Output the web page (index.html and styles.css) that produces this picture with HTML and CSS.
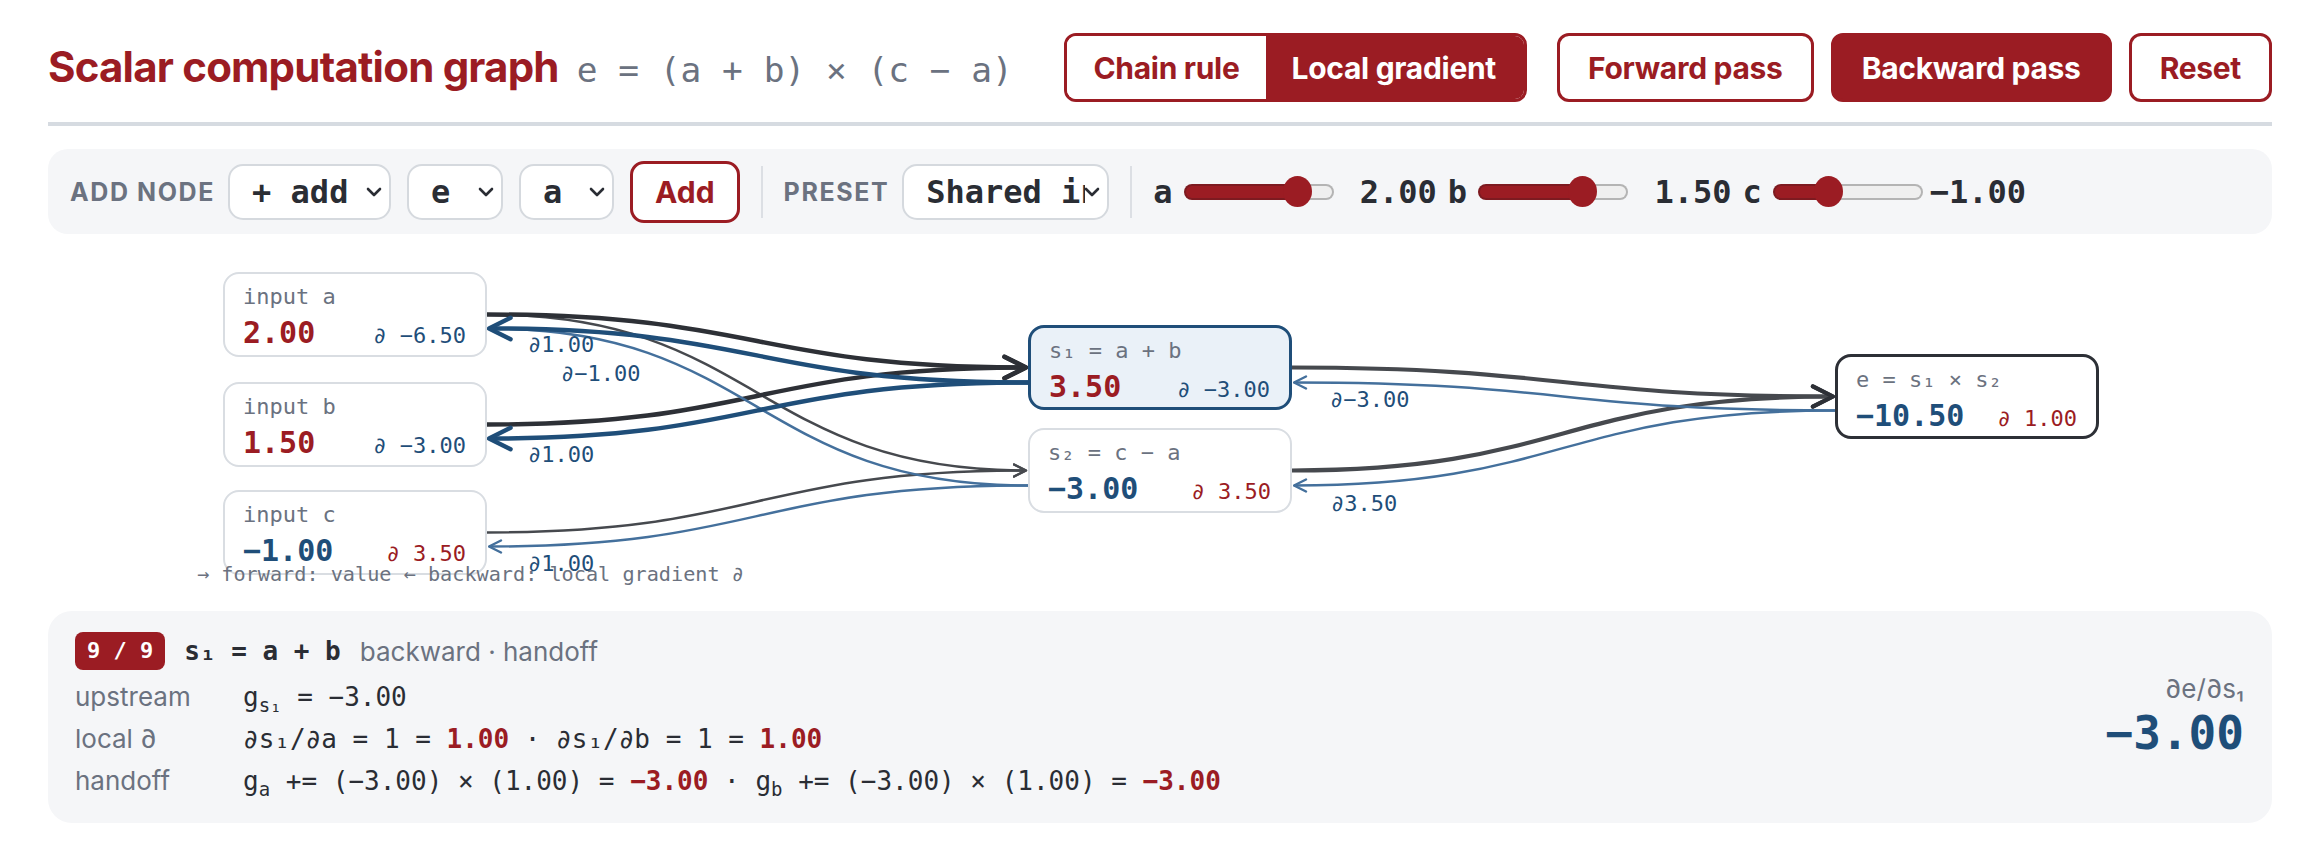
FILE: index.html
```html
<!DOCTYPE html>
<html lang="en">
<head>
<meta charset="utf-8">
<title>Scalar computation graph</title>
<link rel="stylesheet" href="styles.css">
</head>
<body>
<header class="top">
  <div class="title-group">
    <h1 class="title">Scalar computation graph</h1>
    <code class="formula">e = (a + b) × (c − a)</code>
  </div>
  <div class="actions">
    <div class="segmented">
      <button class="seg">Chain rule</button>
      <button class="seg seg-on">Local gradient</button>
    </div>
    <button class="btn">Forward pass</button>
    <button class="btn btn-solid">Backward pass</button>
    <button class="btn">Reset</button>
  </div>
</header>

<div class="toolbar">
  <span class="tb-label">Add node</span>
  <div class="select w-op">
    <select><option>+ add</option><option>× mul</option><option>− sub</option></select>
    <svg class="chev" viewBox="0 0 16 10"><path d="M2 2 L8 8 L14 2"/></svg>
  </div>
  <div class="select w-var">
    <select><option>e</option><option>s₁</option><option>s₂</option></select>
    <svg class="chev" viewBox="0 0 16 10"><path d="M2 2 L8 8 L14 2"/></svg>
  </div>
  <div class="select w-var2">
    <select><option>a</option><option>b</option><option>c</option></select>
    <svg class="chev" viewBox="0 0 16 10"><path d="M2 2 L8 8 L14 2"/></svg>
  </div>
  <button class="btn-add">Add</button>
  <span class="tb-sep"></span>
  <span class="tb-label">Preset</span>
  <div class="select w-preset">
    <select><option>Shared input</option><option>Chain</option></select>
    <svg class="chev" viewBox="0 0 16 10"><path d="M2 2 L8 8 L14 2"/></svg>
  </div>
  <span class="tb-sep"></span>
  <div class="params">
    <label class="param"><span class="param-name">a</span><input class="range" type="range" min="-3" max="3" step="0.5" value="2" style="--p: 77%"><output class="param-val">2.00</output></label>
    <label class="param"><span class="param-name">b</span><input class="range" type="range" min="-3" max="3" step="0.5" value="1.5" style="--p: 70%"><output class="param-val">1.50</output></label>
    <label class="param"><span class="param-name">c</span><input class="range" type="range" min="-3" max="3" step="0.5" value="-1" style="--p: 36%"><output class="param-val">−1.00</output></label>
  </div>
</div>

<div class="graph-wrap">
  <div class="graph">
    <svg class="edges" width="1926" height="310" viewBox="0 0 1926 310">
      <defs>
        <marker id="ah-dark" viewBox="0 0 10 10" refX="9" refY="5" markerWidth="6" markerHeight="6" orient="auto">
          <path d="M1 1 L9 5 L1 9" fill="none" stroke="#2d3036" stroke-width="1.6" stroke-linecap="round" stroke-linejoin="round"/>
        </marker>
        <marker id="ah-dark-thin" viewBox="0 0 10 10" refX="9" refY="5" markerWidth="6" markerHeight="6" orient="auto">
          <path d="M1 1 L9 5 L1 9" fill="none" stroke="#46494e" stroke-width="1.6" stroke-linecap="round" stroke-linejoin="round"/>
        </marker>
        <marker id="ah-blue" viewBox="0 0 10 10" refX="9" refY="5" markerWidth="6" markerHeight="6" orient="auto">
          <path d="M1 1 L9 5 L1 9" fill="none" stroke="#1f4e79" stroke-width="1.6" stroke-linecap="round" stroke-linejoin="round"/>
        </marker>
        <marker id="ah-blue-thin" viewBox="0 0 10 10" refX="9" refY="5" markerWidth="6" markerHeight="6" orient="auto">
          <path d="M1 1 L9 5 L1 9" fill="none" stroke="#44709c" stroke-width="1.6" stroke-linecap="round" stroke-linejoin="round"/>
        </marker>
      </defs>

      <!-- forward: values flow left to right -->
      <path class="e-fwd thin" d="M290 64.5 C560 64.5 560 220.5 829 220.5" marker-end="url(#ah-dark-thin)"/>
      <path class="e-fwd thin" d="M290 282.5 C560 282.5 560 220.5 829 220.5" marker-end="url(#ah-dark-thin)"/>
      <path class="e-fwd" d="M290 64.5 C560 64.5 560 117.5 829 117.5" marker-end="url(#ah-dark)"/>
      <path class="e-fwd" d="M290 174.5 C560 174.5 560 117.5 829 117.5" marker-end="url(#ah-dark)"/>
      <path class="e-fwd mid" d="M1095 117.5 C1366 117.5 1366 146.5 1636 146.5" marker-end="url(#ah-dark)"/>
      <path class="e-fwd mid" d="M1095 220.5 C1366 220.5 1366 146.5 1636 146.5" marker-end="url(#ah-dark)"/>

      <!-- backward: local gradients flow right to left -->
      <path class="e-bwd thin" d="M831 235.5 C560 235.5 560 78.5 292 78.5" marker-end="url(#ah-blue-thin)"/>
      <path class="e-bwd thin" d="M831 235.5 C560 235.5 560 296.5 292 296.5" marker-end="url(#ah-blue-thin)"/>
      <path class="e-bwd thin" d="M1638 160.5 C1366 160.5 1366 132.5 1097 132.5" marker-end="url(#ah-blue-thin)"/>
      <path class="e-bwd thin" d="M1638 160.5 C1366 160.5 1366 235.5 1097 235.5" marker-end="url(#ah-blue-thin)"/>
      <path class="e-bwd" d="M831 132.5 C560 132.5 560 78.5 292 78.5" marker-end="url(#ah-blue)"/>
      <path class="e-bwd" d="M831 132.5 C560 132.5 560 188.5 292 188.5" marker-end="url(#ah-blue)"/>

      <text class="e-label" x="331" y="102">∂1.00</text>
      <text class="e-label" x="364" y="131">∂−1.00</text>
      <text class="e-label" x="331" y="212">∂1.00</text>
      <text class="e-label" x="331" y="321">∂1.00</text>
      <text class="e-label" x="1133" y="157">∂−3.00</text>
      <text class="e-label" x="1134" y="261">∂3.50</text>
    </svg>

    <div class="node n-a">
      <div class="node-label">input a</div>
      <div class="node-row"><span class="val pos">2.00</span><span class="grad neg">∂ −6.50</span></div>
    </div>
    <div class="node n-b">
      <div class="node-label">input b</div>
      <div class="node-row"><span class="val pos">1.50</span><span class="grad neg">∂ −3.00</span></div>
    </div>
    <div class="node n-c">
      <div class="node-label">input c</div>
      <div class="node-row"><span class="val neg">−1.00</span><span class="grad pos">∂ 3.50</span></div>
    </div>
    <div class="node n-s1 node-active">
      <div class="node-label">s₁ = a + b</div>
      <div class="node-row"><span class="val pos">3.50</span><span class="grad neg">∂ −3.00</span></div>
    </div>
    <div class="node n-s2">
      <div class="node-label">s₂ = c − a</div>
      <div class="node-row"><span class="val neg">−3.00</span><span class="grad pos">∂ 3.50</span></div>
    </div>
    <div class="node n-e node-out">
      <div class="node-label">e = s₁ × s₂</div>
      <div class="node-row"><span class="val neg">−10.50</span><span class="grad pos">∂ 1.00</span></div>
    </div>
  </div>
  <div class="legend">→ forward: value ← backward: local gradient ∂</div>
</div>

<section class="trace">
  <div class="trace-main">
    <div class="trace-head">
      <span class="step">9 / 9</span>
      <span class="trace-op">s₁ = a + b</span>
      <span class="trace-phase">backward · handoff</span>
    </div>
    <div class="trace-rows">
      <span class="k">upstream</span>
      <span class="v">g<sub>s₁</sub> = −3.00</span>
      <span class="k">local ∂</span>
      <span class="v">∂s₁/∂a = 1 = <b class="hot">1.00</b> · ∂s₁/∂b = 1 = <b class="hot">1.00</b></span>
      <span class="k">handoff</span>
      <span class="v">g<sub>a</sub> += (−3.00) × (1.00) = <b class="hot">−3.00</b> · g<sub>b</sub> += (−3.00) × (1.00) = <b class="hot">−3.00</b></span>
    </div>
  </div>
  <div class="trace-result">
    <span class="res-label">∂e/∂s₁</span>
    <span class="res-val">−3.00</span>
  </div>
</section>
</body>
</html>
```

FILE: styles.css
```css
:root {
  --red: #9b1c23;
  --blue: #1f4e79;
  --ink: #2a2d34;
  --muted: #6b7280;
  --line: #d6dbe1;
  --panel: #f5f6f8;
  --mono: "DejaVu Sans Mono", "Liberation Mono", monospace;
  --sans: Inter, "Liberation Sans", sans-serif;
}

* { box-sizing: border-box; }

body {
  margin: 0;
  padding: 0 48px;
  font-family: var(--sans);
  color: var(--ink);
  background: #fff;
}

/* ---------- header ---------- */
.top {
  display: flex;
  align-items: center;
  justify-content: space-between;
  padding: 33px 0 20px;
  border-bottom: 4px solid var(--line);
}

.title-group {
  display: flex;
  align-items: baseline;
  gap: 18px;
}

.title {
  margin: 0;
  font: 700 42px/1.2 var(--sans);
  letter-spacing: -0.8px;
  color: var(--red);
}

.formula {
  font: 400 34.5px var(--mono);
  color: var(--muted);
}

.actions {
  display: flex;
  align-items: center;
  gap: 17px;
}

.segmented {
  display: flex;
  height: 69px;
  margin-right: 13px;
  border: 3px solid var(--red);
  border-radius: 12px;
  overflow: hidden;
}

.seg {
  border: 0;
  margin: 0;
  padding: 0 26px;
  font: 700 30px var(--sans);
  letter-spacing: -0.3px;
  color: var(--red);
  background: #fff;
}

.seg-on {
  color: #fff;
  background: var(--red);
  padding-right: 28px;
}

.btn {
  height: 69px;
  margin: 0;
  padding: 0 28px;
  border: 3px solid var(--red);
  border-radius: 12px;
  font: 700 30px var(--sans);
  letter-spacing: -0.3px;
  color: var(--red);
  background: #fff;
}

.btn-solid {
  color: #fff;
  background: var(--red);
}

/* ---------- toolbar ---------- */
.toolbar {
  display: flex;
  align-items: center;
  gap: 16px;
  height: 85px;
  margin-top: 23px;
  padding: 0 22px;
  border-radius: 20px;
  background: var(--panel);
}

.tb-label {
  margin-right: -3px;
  font: 700 25px var(--sans);
  letter-spacing: 1.6px;
  text-transform: uppercase;
  color: var(--muted);
}

.tb-sep {
  width: 2px;
  height: 52px;
  margin: 0 5px;
  background: #dcdfe4;
}

.select {
  position: relative;
  height: 56px;
}

.select select {
  -webkit-appearance: none;
  appearance: none;
  width: 100%;
  height: 100%;
  margin: 0;
  padding: 0 22px;
  border: 2px solid #d5d9de;
  border-radius: 15px;
  background: #fff;
  font: 700 32px var(--mono);
  color: var(--ink);
}

.chev {
  position: absolute;
  right: 9px;
  top: 23px;
  width: 16px;
  height: 10px;
  pointer-events: none;
}

.chev path {
  fill: none;
  stroke: var(--ink);
  stroke-width: 2.6;
  stroke-linecap: round;
  stroke-linejoin: round;
}

.w-op { width: 163px; }
.w-var { width: 96px; }
.w-var2 { width: 95px; }
.w-preset { width: 207px; }

.btn-add {
  height: 62px;
  margin: 0;
  padding: 0 22px;
  border: 3px solid var(--red);
  border-radius: 14px;
  background: #fff;
  font: 700 30px var(--sans);
  color: var(--red);
}

.params {
  display: flex;
  align-items: center;
  gap: 11px;
}

.param {
  display: flex;
  align-items: center;
  font: 700 32px var(--mono);
  color: var(--ink);
}

.param-name { margin-right: 11px; }

.param-val {
  width: 5ch;
  margin-left: 7px;
  text-align: right;
}

.range {
  -webkit-appearance: none;
  appearance: none;
  width: 150px;
  height: 32px;
  margin: 0;
  background: transparent;
}

.range::-webkit-slider-runnable-track {
  height: 16px;
  border: 2px solid transparent;
  border-radius: 8px;
  background:
    linear-gradient(to right, var(--red) var(--p), #efefef var(--p)) padding-box,
    linear-gradient(to right, #7d1a20 var(--p), #b4b4b4 var(--p)) border-box;
}

.range::-webkit-slider-thumb {
  -webkit-appearance: none;
  appearance: none;
  width: 29px;
  height: 31px;
  margin-top: -9.5px;
  border: 0;
  border-radius: 50%;
  background: var(--red);
}

/* ---------- graph ---------- */
.graph-wrap {
  width: 1926px;
  margin: 16px auto 0;
}

.graph {
  position: relative;
  height: 310px;
}

.edges {
  position: absolute;
  left: 0;
  top: 0;
  overflow: visible;
}

.e-fwd, .e-bwd {
  fill: none;
  stroke-width: 4.5;
}

.e-fwd { stroke: #2d3036; }
.e-fwd.mid { stroke: #46494e; stroke-width: 4.2; }
.e-fwd.thin { stroke: #46494e; stroke-width: 2.5; }
.e-bwd { stroke: var(--blue); }
.e-bwd.thin { stroke: #44709c; stroke-width: 2.5; }

.e-label {
  font: 400 22px var(--mono);
  fill: var(--blue);
}

.node {
  position: absolute;
  width: 264px;
  height: 85px;
  padding: 8px 19px 0 18px;
  border: 2px solid #d9dde2;
  border-radius: 16px;
  background: #fff;
}

.n-a { left: 26px; top: 22px; }
.n-b { left: 26px; top: 132px; }
.n-c { left: 26px; top: 240px; }
.n-s1 { left: 831px; top: 75px; }
.n-s2 { left: 831px; top: 178px; }
.n-e { left: 1638px; top: 104px; }

.node-active {
  border: 3px solid var(--blue);
  background: #eaf1f8;
}

.node-out {
  border: 3px solid #2d3036;
}

.node-label {
  font: 400 22px/30px var(--mono);
  color: var(--muted);
}

.node-row {
  display: flex;
  align-items: baseline;
  justify-content: space-between;
  margin-top: 3px;
  line-height: 36px;
}

.val {
  font: 700 30px var(--mono);
}

.grad {
  font: 400 22px var(--mono);
}

.pos { color: var(--red); }
.neg { color: var(--blue); }

.legend {
  position: relative;
  font: 400 20.2px/28px var(--mono);
  color: var(--muted);
}

/* ---------- step trace ---------- */
.trace {
  display: flex;
  align-items: center;
  justify-content: space-between;
  margin-top: 23px;
  padding: 21px 28px 21px 27px;
  border-radius: 24px;
  background: var(--panel);
}

.trace-head {
  display: flex;
  align-items: center;
  gap: 19px;
  height: 38px;
}

.step {
  height: 38px;
  padding: 0 12px;
  border-radius: 8px;
  background: var(--red);
  font: 700 22px/38px var(--mono);
  color: #fff;
}

.trace-op {
  font: 700 26px var(--mono);
  color: var(--ink);
}

.trace-phase {
  font: 400 26px var(--sans);
  color: var(--muted);
}

.trace-rows {
  display: grid;
  grid-template-columns: 168px auto;
  align-items: baseline;
  margin-top: 6px;
  line-height: 42px;
}

.k {
  font: 400 26px/42px var(--sans);
  color: var(--muted);
}

.v {
  font: 400 26px/42px var(--mono);
  color: var(--ink);
}

.v sub {
  font-size: 19px;
  line-height: 0;
}

.hot {
  font-weight: 700;
  color: var(--red);
}

.trace-result {
  display: flex;
  flex-direction: column;
  align-items: flex-end;
}

.res-label {
  font: 400 26px/32px var(--sans);
  color: var(--muted);
}

.res-val {
  font: 700 46px/56px var(--mono);
  color: var(--blue);
}
```
